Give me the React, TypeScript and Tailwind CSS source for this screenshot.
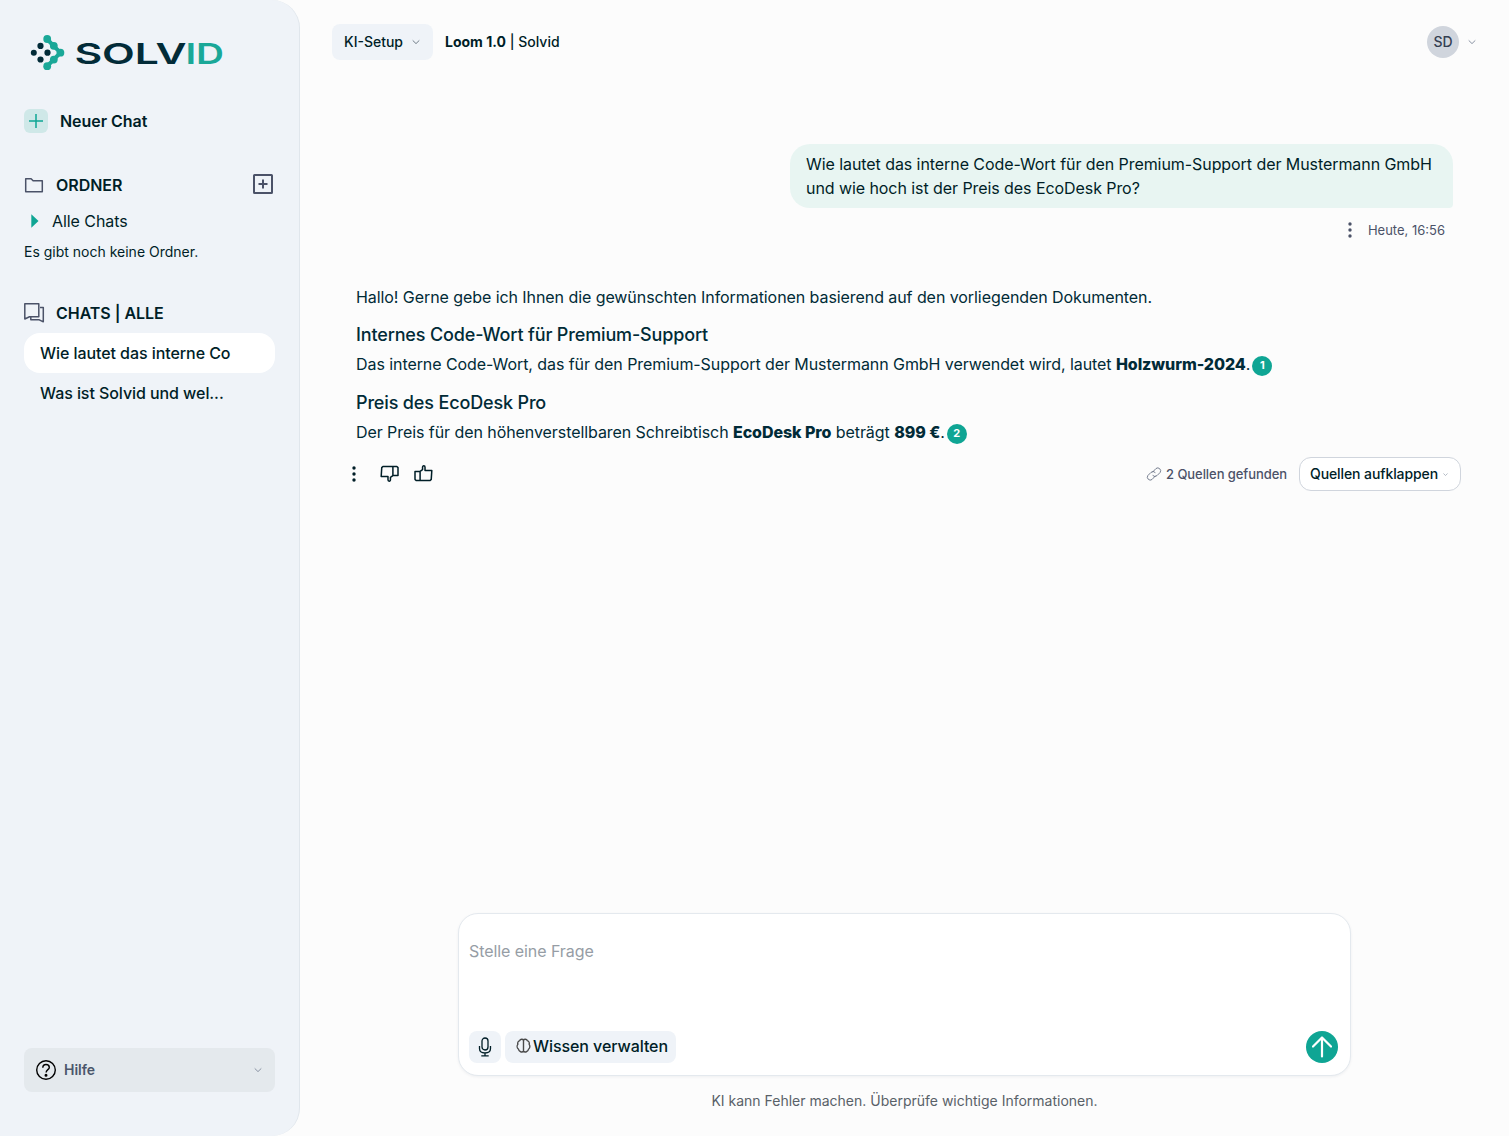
import type { ReactNode } from 'react'

type IconProps = { className?: string }

function Chevron({ className = 'h-2 w-2' }: IconProps) {
  return (
    <svg viewBox="0 0 8 8" className={className} fill="none" stroke="currentColor">
      <path d="M.7 2.4 4 5.6l3.3-3.2" />
    </svg>
  )
}

function Dots({ className }: IconProps) {
  return (
    <svg viewBox="0 0 6 18" className={className} fill="currentColor">
      <circle cx="3" cy="3" r="1.7" />
      <circle cx="3" cy="9" r="1.7" />
      <circle cx="3" cy="15" r="1.7" />
    </svg>
  )
}

function ThumbIcon({ className }: IconProps) {
  return (
    <svg viewBox="0 0 20 18" className={className} fill="none" stroke="currentColor" strokeWidth="1.6" strokeLinejoin="round">
      <path d="M1 6.8h5.4v9.6H2.2L1 15.2zM6.4 6.8 9 5V2.3c0-.9.5-1.4 1.3-1.4s1.3.5 1.3 1.4v3.5h7.2l-.6 9.4-1.2 1.2H6.4" />
    </svg>
  )
}

function Logo() {
  return (
    <svg viewBox="0 0 194 36" className="h-9 w-[194px]">
      <g fill="#022b38">
        <circle cx="3.8" cy="17.7" r="3" />
        <circle cx="10.5" cy="10.9" r="3.1" />
        <circle cx="17.5" cy="17.7" r="3.1" />
        <circle cx="10.5" cy="24.5" r="3.1" />
      </g>
      <path d="m17 4 6.6 6.8 6.8 6.9-6.8 6.9-6.6 6.7" fill="none" stroke="#1aa898" strokeWidth="4" />
      <g fill="#1aa898">
        <circle cx="17.2" cy="4" r="3.9" />
        <circle cx="23.8" cy="10.8" r="3.9" />
        <circle cx="30.4" cy="17.7" r="3.9" />
        <circle cx="23.8" cy="24.6" r="3.9" />
        <circle cx="17.2" cy="31.2" r="3.9" />
      </g>
      <g fontFamily="Inter, sans-serif" fontSize="29" fontWeight="600">
        <text x="44.5" y="29" textLength="112" lengthAdjust="spacingAndGlyphs" fill="#022b38">SOLV</text>
        <text x="155.5" y="29" textLength="38.5" lengthAdjust="spacingAndGlyphs" fill="#1aa898">ID</text>
      </g>
    </svg>
  )
}

function Source({ children }: { children: ReactNode }) {
  return (
    <span className="relative -top-px ml-0.5 inline-flex h-5 w-5 items-center justify-center rounded-full bg-[#0fa594] text-[11px] leading-none font-bold text-white">
      {children}
    </span>
  )
}

function Sidebar() {
  return (
    <aside className="flex w-[300px] shrink-0 flex-col rounded-r-[28px] border-r border-[#e0e6ec] bg-[#eff3f8] px-6">
      <div className="mt-[35px] ml-1.5 h-9">
        <Logo />
      </div>
      <button className="mt-[38px] flex h-6 items-center gap-3 font-semibold tracking-[-0.04px]">
        <span className="flex h-6 w-6 items-center justify-center rounded-md bg-[#cfe8e8] text-[#0fa594]">
          <svg viewBox="0 0 16 16" className="h-4 w-4" fill="none" stroke="currentColor" strokeWidth="1.5">
            <path d="M8 1v14M1 8h14" />
          </svg>
        </span>
        Neuer Chat
      </button>

      <div className="mt-10 flex h-6 items-center">
        <svg viewBox="0 0 20 16" className="h-4 w-5 text-[#4b5268]" fill="none" stroke="currentColor" strokeWidth="1.5" strokeLinejoin="round">
          <path d="M1.7 1.7h5.4l2 2h9.2v11H1.7z" />
        </svg>
        <span className="ml-3 font-semibold tracking-[-0.04px]">ORDNER</span>
        <svg viewBox="0 0 22 22" className="mr-px mb-0.5 ml-auto h-[22px] w-[22px] text-[#4b5268]" fill="none" stroke="currentColor" strokeWidth="2">
          <rect x="2" y="2" width="18" height="18" rx=".5" />
          <path d="M11 6.5v9M6.5 11h9" />
        </svg>
      </div>
      <div className="mt-3 flex h-6 items-center">
        <svg viewBox="0 0 8 14" className="ml-[7px] h-3.5 w-2" fill="#0fa594">
          <path d="M.3.3v13.4L7.5 7z" />
        </svg>
        <span className="ml-[13px]">Alle Chats</span>
      </div>
      <p className="mt-[9px] text-sm leading-5 tracking-normal">Es gibt noch keine Ordner.</p>

      <div className="mt-[39px] flex h-6 items-center">
        <svg viewBox="0 0 21 20" className="h-5 w-[21px] text-[#4b5268]" fill="none" stroke="currentColor" strokeWidth="1.5" strokeLinejoin="round">
          <path d="M.8.8h14v13H5.5L.8 16zM16 4.6h3.3v14.2l-4-2H6.8v-2.2" />
        </svg>
        <span className="ml-[11px] font-semibold tracking-[-0.04px]">CHATS | ALLE</span>
      </div>
      <div className="mt-2 flex h-10 items-center rounded-2xl bg-white px-4 font-medium">Wie lautet das interne Co</div>
      <div className="flex h-10 items-center px-4 font-medium">Was ist Solvid und wel...</div>

      <button className="mt-auto mb-11 flex h-11 items-center rounded-lg bg-[#e4e9ed] px-3 text-sm font-semibold tracking-normal text-[#4b566b]">
        <svg viewBox="0 0 20 20" className="mr-2 h-5 w-5 text-black" fill="none" stroke="currentColor" strokeWidth="1.4">
          <circle cx="10" cy="10" r="9.3" />
          <path d="M6.8 7.8C6.8 5.7 8 4.5 10 4.5s3.3 1.2 3.3 2.9c0 2.2-3.2 2.4-3.2 5.1" />
          <circle cx="10" cy="15.2" r=".8" fill="currentColor" />
        </svg>
        Hilfe
        <Chevron className="mr-px ml-auto h-2 w-2 text-[#8993a3]" />
      </button>
    </aside>
  )
}

function Header() {
  return (
    <header className="flex h-[84px] items-center pr-[33px] pl-8 text-sm tracking-normal">
      <button className="flex h-9 w-[101px] items-center rounded-lg bg-[#eff3f8] px-3 font-medium">
        KI-Setup
        <Chevron className="mr-px ml-auto h-2 w-2 text-[#707d88]" />
      </button>
      <div className="ml-3 font-medium"><b className="font-bold">Loom 1.0</b> | Solvid</div>
      <div className="ml-auto flex h-8 w-8 items-center justify-center rounded-full bg-[#d0d5dd] font-medium text-[#353f52]">SD</div>
      <Chevron className="ml-[9px] h-2 w-2 text-[#8993a3]" />
    </header>
  )
}

function Conversation() {
  return (
    <section className="flex-1">
      <div className="mt-[60px] mr-14 flex flex-col items-end">
        <div className="w-[663px] rounded-[20px] rounded-br-[4px] bg-[#e8f5f2] px-4 py-2 leading-6">
          <p className="whitespace-nowrap">Wie lautet das interne Code-Wort für den Premium-Support der Mustermann GmbH</p>
          <p>und wie hoch ist der Preis des EcoDesk Pro?</p>
        </div>
        <div className="mt-3 mr-2 flex h-5 items-center text-[13px] tracking-normal text-[#4b5268]">
          <Dots className="mr-[15px] h-[18px] w-1.5" />
          <span className="pt-px">Heute, 16:56</span>
        </div>
      </div>

      <div className="mt-[45px] ml-14 text-[#012b37]">
        <p className="leading-6">Hallo! Gerne gebe ich Ihnen die gewünschten Informationen basierend auf den vorliegenden Dokumenten.</p>
        <h3 className="mt-3 text-lg leading-7 font-medium tracking-[-0.15px]">Internes Code-Wort für Premium-Support</h3>
        <p className="mt-px h-7 leading-7">
          Das interne Code-Wort, das für den Premium-Support der Mustermann GmbH verwendet wird, lautet <b className="font-extrabold">Holzwurm-2024</b>.<Source>1</Source>
        </p>
        <h3 className="mt-[11px] text-lg leading-7 font-medium tracking-[-0.15px]">Preis des EcoDesk Pro</h3>
        <p className="mt-px h-7 leading-7">
          Der Preis für den höhenverstellbaren Schreibtisch <b className="font-extrabold">EcoDesk Pro</b> beträgt <b className="font-extrabold">899 €</b>.<Source>2</Source>
        </p>
      </div>

      <div className="mt-[11px] mr-12 ml-[51px] flex h-[34px] items-center">
        <Dots className="h-[18px] w-1.5" />
        <ThumbIcon className="mb-px ml-[23px] h-[17px] w-[19px] rotate-180" />
        <ThumbIcon className="mb-px ml-[15px] h-[17px] w-[19px]" />
        <svg viewBox="0 0 16 16" className="ml-auto h-4 w-4 text-[#687083]" fill="none" stroke="currentColor" strokeWidth=".9" strokeLinecap="round">
          <path d="M6.7 6 10 2.5a2.9 2.9 0 0 1 4.1 4L11 9.6a2.9 2.9 0 0 1-4.1 0" />
          <path d="M9.3 10 6 13.5a2.9 2.9 0 0 1-4.1-4L5 6.4a2.9 2.9 0 0 1 4.1 0" />
        </svg>
        <span className="ml-1 pt-px text-[13px] font-medium text-[#4b5268]">2 Quellen gefunden</span>
        <button className="ml-3 flex h-[34px] w-[162px] items-center rounded-xl border border-[#d0d5dd] bg-white px-2.5 text-sm font-medium tracking-[-0.1px]">
          Quellen aufklappen
          <Chevron className="mr-0.5 ml-auto h-[5px] w-[5px] text-[#8993a3]" />
        </button>
      </div>
    </section>
  )
}

function Composer() {
  return (
    <footer className="ml-[158px] w-[893px]">
      <div className="flex h-[163px] flex-col rounded-[20px] border border-[#e4e9ee] bg-white px-2.5 shadow-[0_1px_3px_rgba(16,40,60,0.06)]">
        <div className="mt-[25px] leading-6 text-[#969da5]">Stelle eine Frage</div>
        <div className="mt-auto mb-[12.5px] flex h-8 items-center">
          <button className="flex h-8 w-8 items-center justify-center rounded-lg bg-[#eff3f8]">
            <svg viewBox="0 0 14 20" className="h-5 w-3.5" fill="none" stroke="currentColor" strokeWidth="1.3">
              <rect x="4" y="1" width="6" height="12" rx="3" />
              <path d="M1.5 9v2.5c0 3 2.2 4.5 5.5 4.5s5.5-1.5 5.5-4.5V9M7 16v3M3.3 18.8h7.4" />
            </svg>
          </button>
          <button className="ml-1 flex h-8 w-[171px] items-center rounded-lg bg-[#eff3f8] pb-px pl-[11px] font-medium">
            <svg viewBox="0 0 15 16" className="mr-0.5 h-4 w-[15px] shrink-0 text-[#4a4a4a]" fill="none" stroke="currentColor" strokeWidth="1.4">
              <path d="M7.5 2.1C6.8.9 4.5.8 3.6 2.6 2 3.1 1.4 5 1.8 6.4c-1.1 1.5-.8 3.8.7 4.9.2 2.4 3.8 3.4 5 1.9zM7.5 2.1C8.2.9 10.5.8 11.4 2.6c1.6.5 2.2 2.4 1.8 3.8 1.1 1.5.8 3.8-.7 4.9-.2 2.4-3.8 3.4-5 1.9" />
            </svg>
            Wissen verwalten
          </button>
          <button className="mr-0.5 ml-auto flex h-8 w-8 items-center justify-center rounded-full bg-[#0fa594] text-white">
            <svg viewBox="0 0 20 22" className="h-[22px] w-5" fill="none" stroke="currentColor" strokeWidth="2.2" strokeLinecap="round" strokeLinejoin="round">
              <path d="M10 20.5V1.5M1 10.5l9-9 9 9" />
            </svg>
          </button>
        </div>
      </div>
      <p className="mt-[15px] mb-[25px] text-center text-sm leading-5 tracking-normal text-[#596168]">KI kann Fehler machen. Überprüfe wichtige Informationen.</p>
    </footer>
  )
}

export default function App() {
  return (
    <div className="flex h-screen overflow-hidden bg-[#fcfcfc] font-['Inter',sans-serif] text-base tracking-[-0.07px] text-[#001e27]">
      <Sidebar />
      <main className="flex min-w-0 flex-1 flex-col">
        <Header />
        <Conversation />
        <Composer />
      </main>
    </div>
  )
}
